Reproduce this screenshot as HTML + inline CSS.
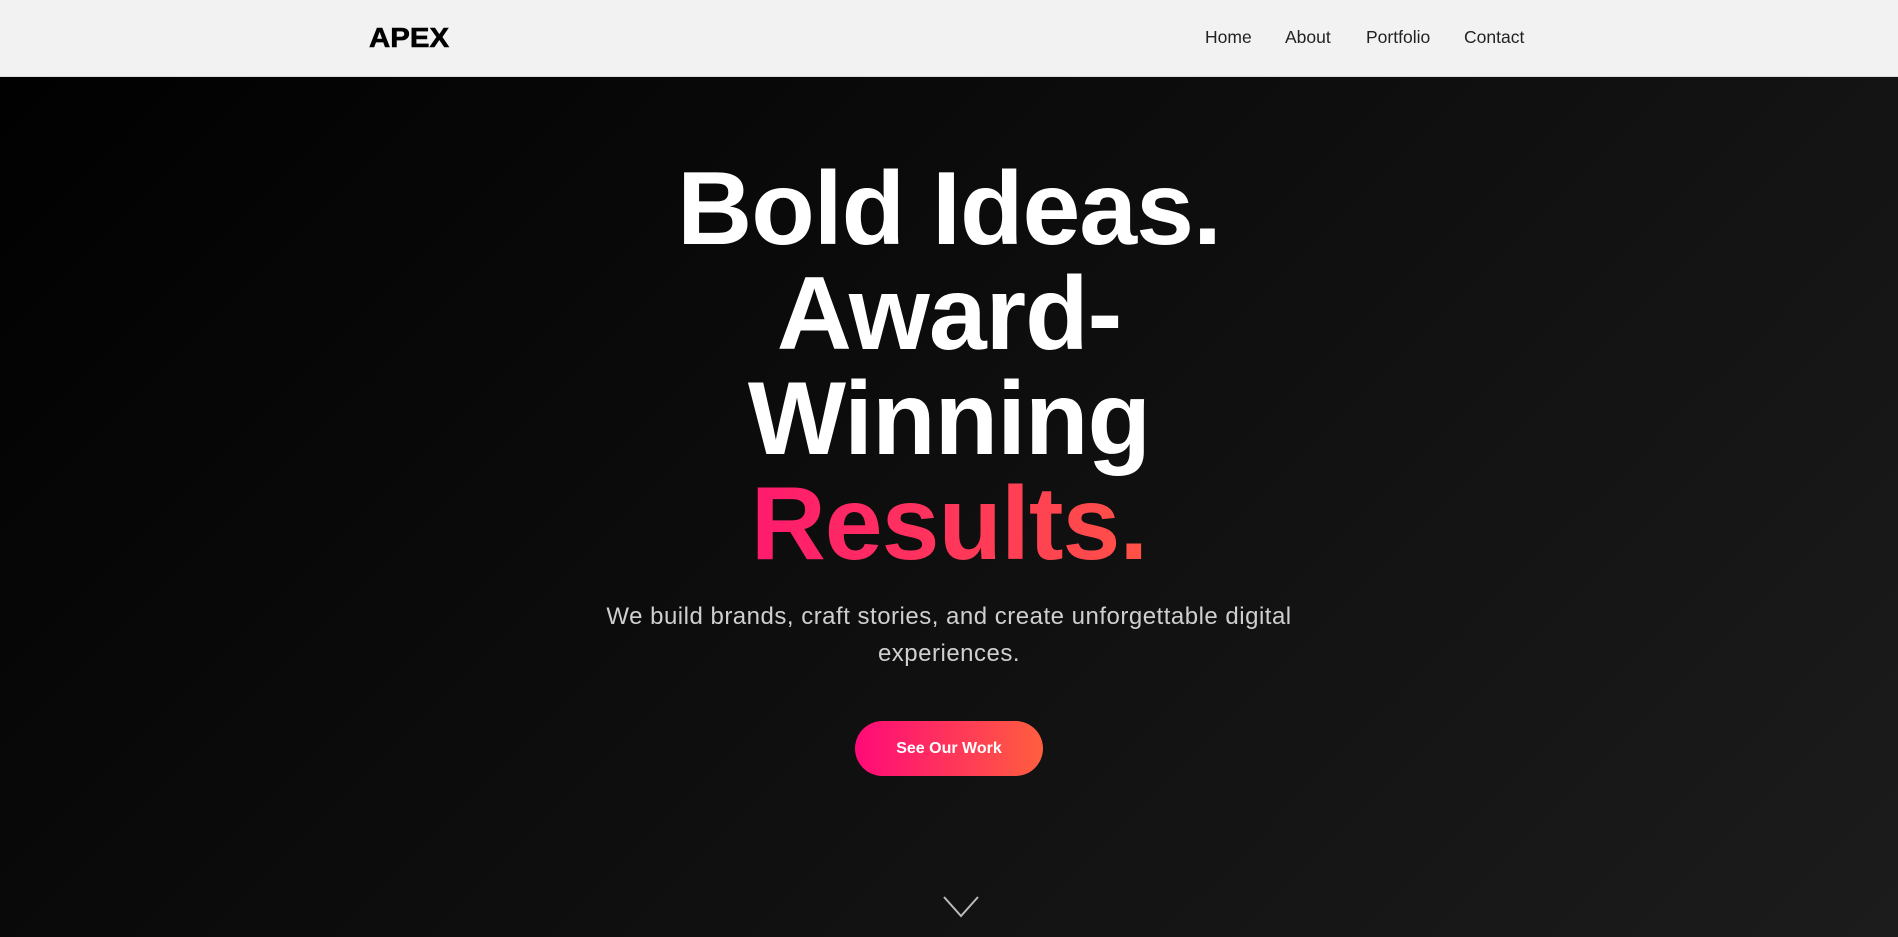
<!DOCTYPE html>
<html><head><meta charset="utf-8"><style>
*{margin:0;padding:0;box-sizing:border-box}
html,body{width:1898px;height:937px;overflow:hidden;font-family:"Liberation Sans",sans-serif}
body{background:linear-gradient(135deg,#000 0%,#0e0e0e 50%,#1c1c1c 100%);position:relative}
header{position:absolute;left:0;top:0;width:1898px;height:77px;background:#f2f2f2;border-bottom:1px solid #ddd}
.logo{position:absolute;left:369px;top:22px;font-size:28px;font-weight:900;color:#000;transform:scaleX(1.05);transform-origin:left;-webkit-text-stroke:0.6px #000}
nav{position:absolute;top:27px;font-size:17.5px;color:#222}
nav span{position:absolute;white-space:nowrap}
h1{position:absolute;left:0;top:157px;width:1898px;text-align:center;font-size:104px;line-height:105px;font-weight:900;color:#fff;letter-spacing:-1px}
h1 .g{background:linear-gradient(90deg,#ff1a6e,#ff5247);-webkit-background-clip:text;background-clip:text;color:transparent}
p{position:absolute;left:569px;top:598px;width:760px;text-align:center;font-size:24px;letter-spacing:0.5px;line-height:37px;color:#cfcfcf}
.btn{position:absolute;left:855px;top:721px;width:188px;height:55px;border-radius:28px;background:linear-gradient(90deg,#ff0a78,#ff5e3f);color:#fff;font-weight:700;font-size:16px;text-align:center;line-height:55px}
</style></head><body>
<header>
<div class="logo">APEX</div>
<nav><span style="left:1205px">Home</span><span style="left:1285px">About</span><span style="left:1366px">Portfolio</span><span style="left:1464px">Contact</span></nav>
</header>
<h1>Bold Ideas.<br>Award-<br>Winning<br><span class="g">Results.</span></h1>
<p>We build brands, craft stories, and create unforgettable digital experiences.</p>
<div class="btn">See Our Work</div>
<svg style="position:absolute;left:942px;top:895px" width="38" height="24" viewBox="0 0 38 24"><path d="M2 2 L19 21 L36 2" fill="none" stroke="#bbb" stroke-width="2"/></svg>
</body></html>
